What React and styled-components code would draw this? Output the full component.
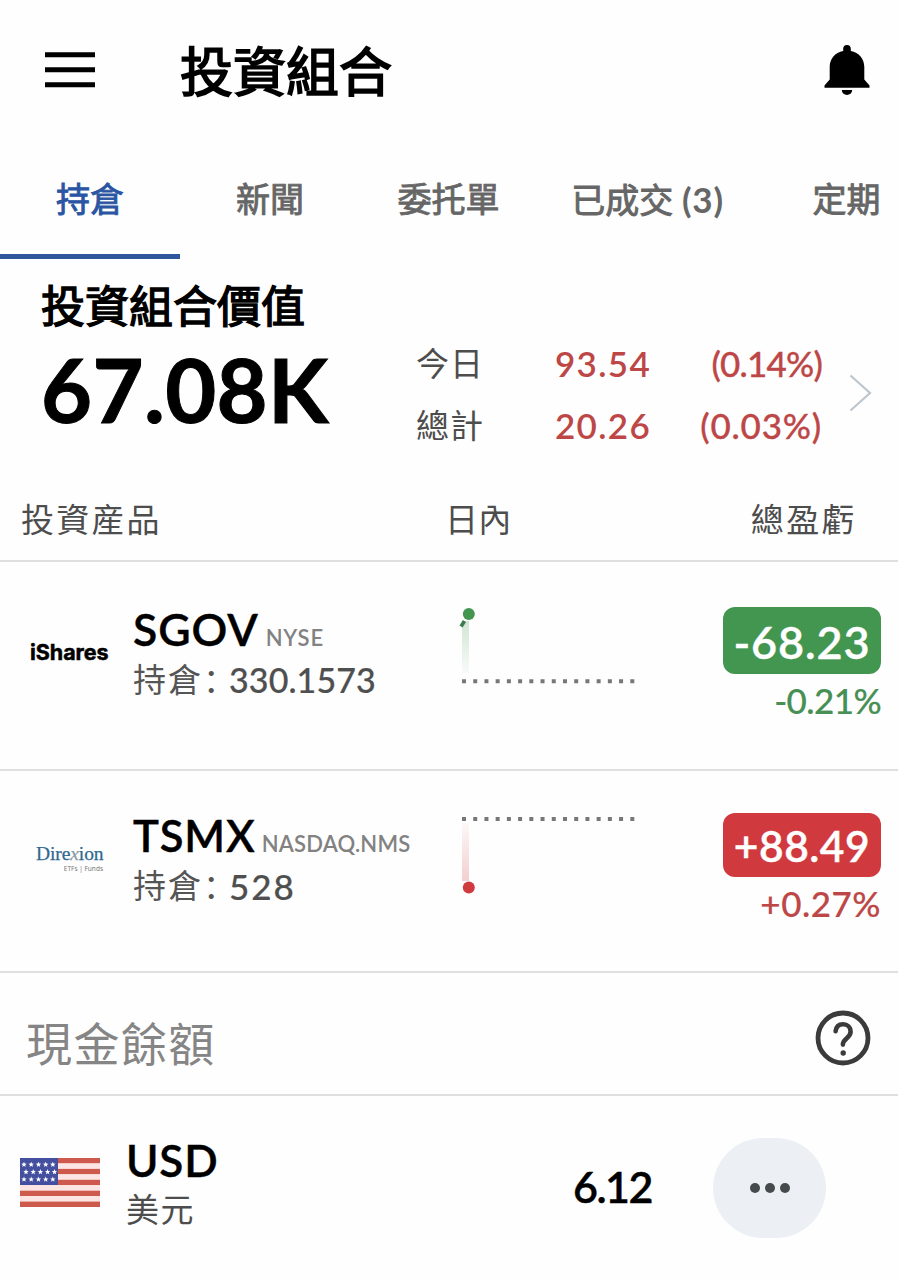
import React from "react";
import styled, { createGlobalStyle } from "styled-components";

const GlobalStyle = createGlobalStyle`
  * { box-sizing: border-box; }
  body {
    margin: 0;
    background: #fefefe;
    font-family: Lato, "Noto Sans CJK TC", sans-serif;
    color: #000;
    overflow: hidden;
  }
`;

const Screen = styled.div`
  width: 898px;
  height: 1280px;
  display: flex;
  flex-direction: column;
  overflow: hidden;
`;

const Text = styled.span`
  display: block;
  white-space: pre;
  font-size: ${(p) => p.$size}px;
  line-height: ${(p) => p.$line || 44}px;
  font-weight: ${(p) => p.$weight || 400};
  letter-spacing: ${(p) => p.$track || 0}px;
  color: ${(p) => p.$color || "#000"};
  -webkit-text-stroke: ${(p) => p.$stroke || 0}px currentColor;
`;

const Header = styled.header`
  height: 140px;
  display: flex;
  align-items: center;
  padding: 0 28px 0 44px;
`;

const Title = styled.h1`
  flex: 1;
  margin: 4px 0 0 84px;
  font-size: 53px;
  line-height: 60px;
  font-weight: 400;
  -webkit-text-stroke: 1.7px #000;
`;

const TabBar = styled.nav`
  height: 119px;
  display: flex;
`;

const Tab = styled.div`
  flex: 0 0 ${(p) => p.$width}px;
  height: 119px;
  padding-top: 39px;
  text-align: center;
  white-space: pre;
  font-size: 34px;
  line-height: 40px;
  font-weight: 400;
  -webkit-text-stroke: 0.9px currentColor;
  color: ${(p) => (p.$active ? "#2a55a3" : "#666")};
  border-bottom: 5px solid ${(p) => (p.$active ? "#2f569c" : "transparent")};
`;

const TabCount = styled.span`
  font-size: 35px;
  font-weight: 700;
  letter-spacing: 0.8px;
  -webkit-text-stroke: 0;
`;

const Summary = styled.section`
  height: 219px;
  display: flex;
  padding-left: 41px;
`;

const SummaryValue = styled.div`
  width: 375px;
  padding-top: 22px;
`;

const TotalValue = styled.div`
  margin-top: 8px;
  font-size: 88px;
  line-height: 100px;
  font-weight: 700;
  letter-spacing: 0.4px;
  -webkit-text-stroke: 1px #000;
`;

const Stats = styled.div`
  width: 407px;
  padding-top: 73px;
`;

const StatRow = styled.div`
  display: grid;
  grid-template-columns: 134px 101px 171px;
  height: 62px;
  align-items: start;
  & > :nth-child(n + 2) { text-align: right; }
`;

const ChevronBox = styled.div`
  padding: 114px 0 0 26px;
`;

const Columns = styled.div`
  height: 84px;
  display: grid;
  grid-template-columns: 424px 280px 1fr;
  padding: 19px 41px 0 21px;
  border-bottom: 2px solid #dfdfdf;
  & > :last-child { text-align: right; }
`;

const Holding = styled.article`
  height: ${(p) => p.$height}px;
  display: grid;
  grid-template-columns: 133px 322px 190px 1fr;
  padding-right: 17px;
  border-bottom: 2px solid #dfdfdf;
`;

const LogoBox = styled.div`
  padding: ${(p) => p.$top}px 0 0 ${(p) => p.$left}px;
`;

const ISharesLogo = styled.div`
  font-family: Inter, sans-serif;
  font-size: 21.5px;
  line-height: 28px;
  font-weight: 700;
  letter-spacing: -0.05px;
  -webkit-text-stroke: 0.5px #000;
`;

const DirexionLogo = styled.div`
  width: 67px;
  font-family: "Liberation Serif", serif;
  font-size: 19.5px;
  line-height: 22px;
  color: #2f6890;
  letter-spacing: -0.1px;
  -webkit-text-stroke: 0.25px currentColor;
  & i { color: #8a9aa6; }
`;

const DirexionTag = styled.div`
  width: 67px;
  font-family: "Noto Sans", sans-serif;
  font-size: 6.5px;
  line-height: 8px;
  color: #777;
  text-align: right;
`;

const Info = styled.div`
  padding-top: ${(p) => p.$top}px;
`;

const SymbolLine = styled.div`
  display: flex;
  align-items: baseline;
  gap: ${(p) => p.$gap}px;
`;

const QuantityLine = styled.div`
  display: flex;
  margin-top: 4px;
`;

const QuantityLabel = styled.span`
  width: 96px;
  margin-top: -1px;
  white-space: nowrap;
  font-family: Lato, "Noto Sans CJK SC", sans-serif;
  font-feature-settings: "halt";
  font-size: 33px;
  line-height: 44px;
  letter-spacing: 2px;
  color: #555;
`;

const Result = styled.div`
  display: flex;
  flex-direction: column;
  align-items: flex-end;
  padding-top: ${(p) => p.$top}px;
`;

const Badge = styled.div`
  width: 158px;
  height: ${(p) => p.$height}px;
  padding-top: 2px;
  border-radius: 12px;
  background: ${(p) => p.$color};
  display: flex;
  align-items: center;
  justify-content: center;
`;

const CashHeader = styled.div`
  height: 123px;
  display: flex;
  justify-content: space-between;
  padding: 0 26px 0 26px;
  border-bottom: 2px solid #dfdfdf;
`;

const CashTitle = styled.h2`
  margin: 41px 0 0;
  font-size: 46px;
  line-height: 60px;
  font-weight: 400;
  letter-spacing: 1.4px;
  color: #858585;
`;

const HelpBox = styled.div`
  padding-top: 36px;
`;

const CashRow = styled.div`
  height: 184px;
  display: flex;
`;

const FlagBox = styled.div`
  width: 126px;
  padding: 62px 0 0 20px;
`;

const Currency = styled.div`
  width: 300px;
  padding-top: 40px;
`;

const Amount = styled.div`
  width: 226px;
  padding-top: 67px;
  text-align: right;
`;

const MoreButton = styled.button`
  margin: 42px 0 0 61px;
  width: 113px;
  height: 100px;
  padding: 0;
  border: 0;
  border-radius: 50px;
  background: #ecf0f4;
  display: flex;
  align-items: center;
  justify-content: center;
  gap: 5px;
`;

const Dot = styled.span`
  width: 10px;
  height: 10px;
  border-radius: 50%;
  background: #454a4d;
`;

const MenuIcon = () => (
  <svg width="52" height="40" viewBox="0 0 52 40">
    <path d="M1 4.8H51M1 19.8H51M1 34.8H51" stroke="#000" strokeWidth="5" />
  </svg>
);

const BellIcon = () => (
  <svg width="46" height="52" viewBox="0 0 46 52">
    <path d="M19.2 7V4.8a3.8 3.8 0 0 1 7.6 0V7C35 8.8 40.3 14.5 40.3 23v12.5l5.2 6v2.2H.5v-2.2l5.2-6V23C5.7 14.5 11 8.8 19.2 7Z" />
    <path d="M17.8 46h10.4a5.2 5 0 0 1-10.4 0Z" />
  </svg>
);

const Chevron = () => (
  <svg width="24" height="40" viewBox="0 0 24 40">
    <path d="M1.5 2.5 21 20 1.5 37.5" fill="none" stroke="#bdc6cd" strokeWidth="2.2" />
  </svg>
);

const HelpIcon = () => (
  <svg width="58" height="60" viewBox="0 0 58 60" fill="none" stroke="#3b3b3b" strokeLinecap="round">
    <circle cx="29" cy="29" r="25" strokeWidth="4.8" />
    <path d="M21.6 22.2c.6-4.7 3.5-6.9 7.4-6.9 4.600 0 7.600 3 7.600 7.400 0 6.200-7.700 6.700-7.700 12.900" strokeWidth="4.6" />
    <circle cx="29.2" cy="44" r="2.7" fill="#3b3b3b" stroke="none" />
  </svg>
);

const STRIPES = [0, 1, 2, 3, 4, 5, 6, 7, 8];
const STARS = [
  [4, 6.5], [11.2, 6.5], [18.5, 6.5], [25.7, 6.5], [32.8, 6.5],
  [6, 13.9], [13.2, 13.9], [20.4, 13.9], [27.6, 13.9], [34.5, 13.9],
  [4, 21.3], [11.2, 21.3], [18.5, 21.3], [25.7, 21.3], [32.8, 21.3],
];

const Flag = () => (
  <svg width="80" height="49" viewBox="0 0 80 49">
    {STRIPES.map((i) => (
      <rect key={i} y={i * 5.444} width="80" height="5.5" fill={i % 2 ? "#fde5e3" : "#cd5a4c"} />
    ))}
    <rect width="38" height="27" fill="#444f9f" />
    {STARS.map(([x, y]) => (
      <path
        key={`${x}-${y}`}
        transform={`translate(${x} ${y})`}
        d="M0-2.8.75-.9 2.7-.8 1.2.45 1.7 2.4 0 1.3-1.7 2.4-1.2.45-2.7-.8-.75-.9Z"
        fill="#fff"
      />
    ))}
  </svg>
);

const Sparkline = ({ up, color, height }) => {
  const base = up ? 119.2 : 48;
  const end = up ? 52 : 116.5;
  const id = up ? "fade-up" : "fade-down";
  return (
    <svg width="190" height={height} viewBox={`0 0 190 ${height}`}>
      <defs>
        <linearGradient id={id} x1="0" x2="0" y1={up ? 0 : 1} y2={up ? 1 : 0}>
          <stop offset="0" stopColor={color} stopOpacity="0.24" />
          <stop offset="1" stopColor={color} stopOpacity="0.03" />
        </linearGradient>
      </defs>
      <rect x="7" y={up ? 59 : 52} width="7" height={up ? 52 : 58} fill={`url(#${id})`} />
      {up && <path d="M7 63 8.5 60.5" stroke="#3c7c4c" strokeWidth="3.6" strokeLinecap="square" />}
      <path d={`M7 ${base}H182`} stroke="#777" strokeWidth="4" strokeDasharray="4 7.22" />
      <circle cx="13.8" cy={end} r="6" fill={color} />
    </svg>
  );
};

const GREEN = "#439650";
const RED = "#d0393d";
const LOSS = "#bd4747";
const GREY = "#4d4d4d";

export default function App() {
  return (
    <>
      <GlobalStyle />
      <Screen>
        <Header>
          <MenuIcon />
          <Title>投資組合</Title>
          <BellIcon />
        </Header>

        <TabBar>
          <Tab $width={180} $active>持倉</Tab>
          <Tab $width={180}>新聞</Tab>
          <Tab $width={177}>委托單</Tab>
          <Tab $width={221}>已成交 <TabCount>(3)</TabCount></Tab>
          <Tab $width={177}>定期</Tab>
        </TabBar>

        <Summary>
          <SummaryValue>
            <Text $size={44} $line={50} $stroke={1.4}>投資組合價值</Text>
            <TotalValue>67.08K</TotalValue>
          </SummaryValue>
          <Stats>
            <StatRow>
              <Text $size={33} $line={62} $color={GREY} $track={1}>今日</Text>
              <Text $size={35} $line={62} $color={LOSS} $weight={600} $track={1.3}>93.54</Text>
              <Text $size={35} $line={62} $color={LOSS} $weight={500} $track={-0.8} $stroke={0.3}>(0.14%)</Text>
            </StatRow>
            <StatRow>
              <Text $size={33} $line={62} $color={GREY} $track={1}>總計</Text>
              <Text $size={35} $line={62} $color={LOSS} $weight={600} $track={1.3}>20.26</Text>
              <Text $size={35} $line={62} $color={LOSS} $weight={500} $track={0.8} $stroke={0.3}>(0.03%)</Text>
            </StatRow>
          </Stats>
          <ChevronBox><Chevron /></ChevronBox>
        </Summary>

        <Columns>
          <Text $size={33} $color={GREY} $track={2.2}>投資産品</Text>
          <Text $size={33} $color={GREY} $track={0.2}>日內</Text>
          <Text $size={33} $color={GREY} $track={2.4}>總盈虧</Text>
        </Columns>

        <Holding $height={209}>
          <LogoBox $top={76} $left={30}>
            <ISharesLogo>iShares</ISharesLogo>
          </LogoBox>
          <Info $top={42}>
            <SymbolLine $gap={7}>
              <Text $size={44.5} $line={50} $weight={600} $track={0.9} $stroke={0.4}>SGOV</Text>
              <Text $size={22} $line={30} $weight={600} $color="#828282" $track={0.8}>NYSE</Text>
            </SymbolLine>
            <QuantityLine>
              <QuantityLabel>持倉：</QuantityLabel>
              <Text $size={34} $color="#4f4f4f" $weight={500} $track={0.1} $stroke={0.2}>330.1573</Text>
            </QuantityLine>
          </Info>
          <Sparkline up color={GREEN} height={207} />
          <Result $top={45}>
            <Badge $height={67} $color={GREEN}>
              <Text $size={45} $line={60} $weight={600} $color="#fff" $track={0.9} $stroke={0.4}>-68.23</Text>
            </Badge>
            <Text $size={35} $line={52} $weight={500} $color="#478f54" $track={-0.6} $stroke={0.2}>-0.21%</Text>
          </Result>
        </Holding>

        <Holding $height={202}>
          <LogoBox $top={72} $left={36}>
            <DirexionLogo>Dire<i>x</i>ion</DirexionLogo>
            <DirexionTag>ETFs | Funds</DirexionTag>
          </LogoBox>
          <Info $top={39}>
            <SymbolLine $gap={6}>
              <Text $size={43.5} $line={50} $weight={600} $track={0.9} $stroke={0.4}>TSMX</Text>
              <Text $size={22} $line={30} $weight={600} $color="#828282" $track={0.2}>NASDAQ.NMS</Text>
            </SymbolLine>
            <QuantityLine>
              <QuantityLabel>持倉：</QuantityLabel>
              <Text $size={35} $color="#4f4f4f" $weight={500} $track={2} $stroke={0.2}>528</Text>
            </QuantityLine>
          </Info>
          <Sparkline color={RED} height={200} />
          <Result $top={42}>
            <Badge $height={64} $color={RED}>
              <Text $size={42.5} $line={60} $weight={600} $color="#fff" $track={0.5} $stroke={0.4}>+88.49</Text>
            </Badge>
            <Text $size={35} $line={52} $weight={500} $color={LOSS} $track={0.5} $stroke={0.2}>+0.27%</Text>
          </Result>
        </Holding>

        <CashHeader>
          <CashTitle>現金餘額</CashTitle>
          <HelpBox><HelpIcon /></HelpBox>
        </CashHeader>

        <CashRow>
          <FlagBox><Flag /></FlagBox>
          <Currency>
            <Text $size={44} $line={48} $weight={600} $track={0.8} $stroke={0.4}>USD</Text>
            <Text $size={33} $line={50} $color={GREY} $track={1.6}>美元</Text>
          </Currency>
          <Amount>
            <Text $size={43} $line={48} $weight={600} $track={-1.5} $stroke={0.4}>6.12</Text>
          </Amount>
          <MoreButton aria-label="更多">
            <Dot /><Dot /><Dot />
          </MoreButton>
        </CashRow>
      </Screen>
    </>
  );
}
